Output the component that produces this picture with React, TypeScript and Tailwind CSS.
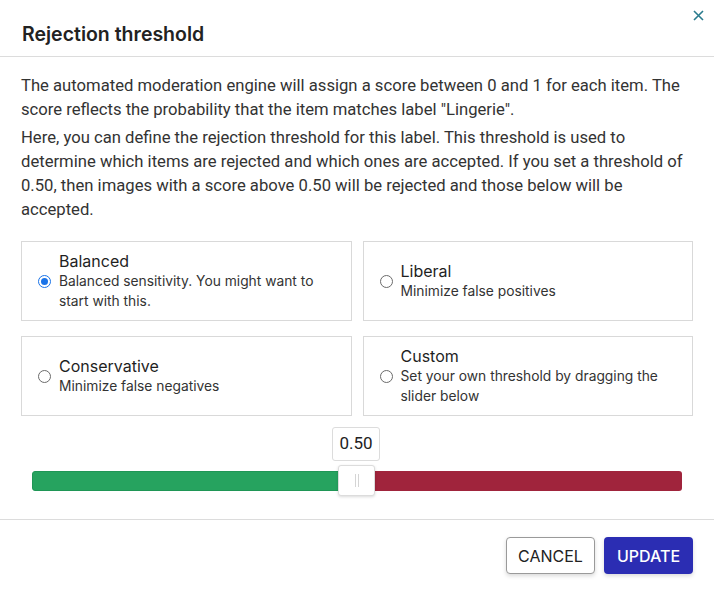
import React from "react";

const inter = { fontFamily: "Inter, 'Noto Sans', sans-serif" };

function Radio({ checked }: { checked?: boolean }) {
  return checked ? (
    <span className="shrink-0 w-[13px] h-[13px] rounded-full border-[1.5px] border-[#1a73e8] flex items-center justify-center bg-white">
      <span className="w-[7px] h-[7px] rounded-full bg-[#1a73e8]" />
    </span>
  ) : (
    <span className="shrink-0 w-[13px] h-[13px] rounded-full border border-[#6b6b6b] bg-white" />
  );
}

function Option({ title, desc, checked }: { title: string; desc: string; checked?: boolean }) {
  return (
    <div className="border border-[#d9d9d9] h-[80px] flex items-center pl-[16px] pr-3 gap-[8px]">
      <Radio checked={checked} />
      <div className="flex flex-col" style={inter}>
        <div className="text-[16px] leading-[20px] text-[#1f1f1f]">{title}</div>
        <div className="text-[13.8px] leading-[20px] text-[#333]">{desc}</div>
      </div>
    </div>
  );
}

export default function App() {
  return (
    <div className="w-[714px] h-[590px] bg-white relative overflow-hidden" style={{ fontFamily: "Roboto, 'Liberation Sans', sans-serif" }}>
      <button className="absolute right-[9px] top-[8px] w-[14px] h-[14px] flex items-center justify-center">
        <svg width="11" height="11" viewBox="0 0 11 11">
          <path d="M1 1L10 10M10 1L1 10" stroke="#2a7b8e" strokeWidth="1.6" />
        </svg>
      </button>
      <div className="h-[57px] border-b border-[#dcdcdc] flex items-end pb-[10px] pl-[22px]">
        <h1 className="text-[19.5px] font-semibold text-[#222] leading-[24px]" style={inter}>Rejection threshold</h1>
      </div>
      <div className="px-[21px] pt-[17px]">
        <p className="text-[16.65px] leading-[24px] text-[#333]">
          The automated moderation engine will assign a score between 0 and 1 for each item. The score reflects the probability that the item matches label "Lingerie".
        </p>
        <p className="mt-[4px] text-[16.65px] leading-[24px] text-[#333]">
          Here, you can define the rejection threshold for this label. This threshold is used to determine which items are rejected and which ones are accepted. If you set a threshold of 0.50, then images with a score above 0.50 will be rejected and those below will be accepted.
        </p>
        <div className="grid grid-cols-2 gap-x-[11px] gap-y-[15px] mt-[19px]">
          <Option title="Balanced" desc="Balanced sensitivity. You might want to start with this." checked />
          <Option title="Liberal" desc="Minimize false positives" />
          <Option title="Conservative" desc="Minimize false negatives" />
          <Option title="Custom" desc="Set your own threshold by dragging the slider below" />
        </div>
        <div className="flex justify-center mt-[11px] ml-[-2px]">
          <div className="h-[34px] w-[48px] border border-[#dcdcdc] rounded-[3px] flex items-center justify-center text-[17px] text-[#222]">0.50</div>
        </div>
        <div className="relative mx-[11px] mt-[10px] h-[20px] flex rounded-[3px] overflow-visible">
          <div className="flex-1 bg-[#26a35f] rounded-l-[3px] border border-[#1f9656]" />
          <div className="flex-1 bg-[#a0243c] rounded-r-[3px]" />
          <div className="absolute left-[306px] top-[-6px] w-[37px] h-[31px] bg-white border border-[#dcdcdc] rounded-[3px] shadow-[0_1px_3px_rgba(0,0,0,0.15)] flex items-center justify-center gap-[2px]">
            <span className="w-px h-[13px] bg-[#d5d5d5]" />
            <span className="w-px h-[13px] bg-[#d5d5d5]" />
          </div>
        </div>
      </div>
      <div className="absolute left-0 right-0 top-[519px] border-t border-[#dcdcdc]" />
      <div className="absolute right-[21px] top-[537px] flex gap-[9px]">
        <button className="w-[89px] h-[37px] border border-[#9a9a9a] rounded-[4px] bg-white text-[16px] text-[#222] shadow-[0_2px_4px_rgba(0,0,0,0.15)]" style={inter}>CANCEL</button>
        <button className="w-[89px] h-[37px] rounded-[4px] bg-[#2b2db3] text-[16px] text-white font-medium shadow-[0_2px_4px_rgba(0,0,0,0.15)]" style={inter}>UPDATE</button>
      </div>
    </div>
  );
}
